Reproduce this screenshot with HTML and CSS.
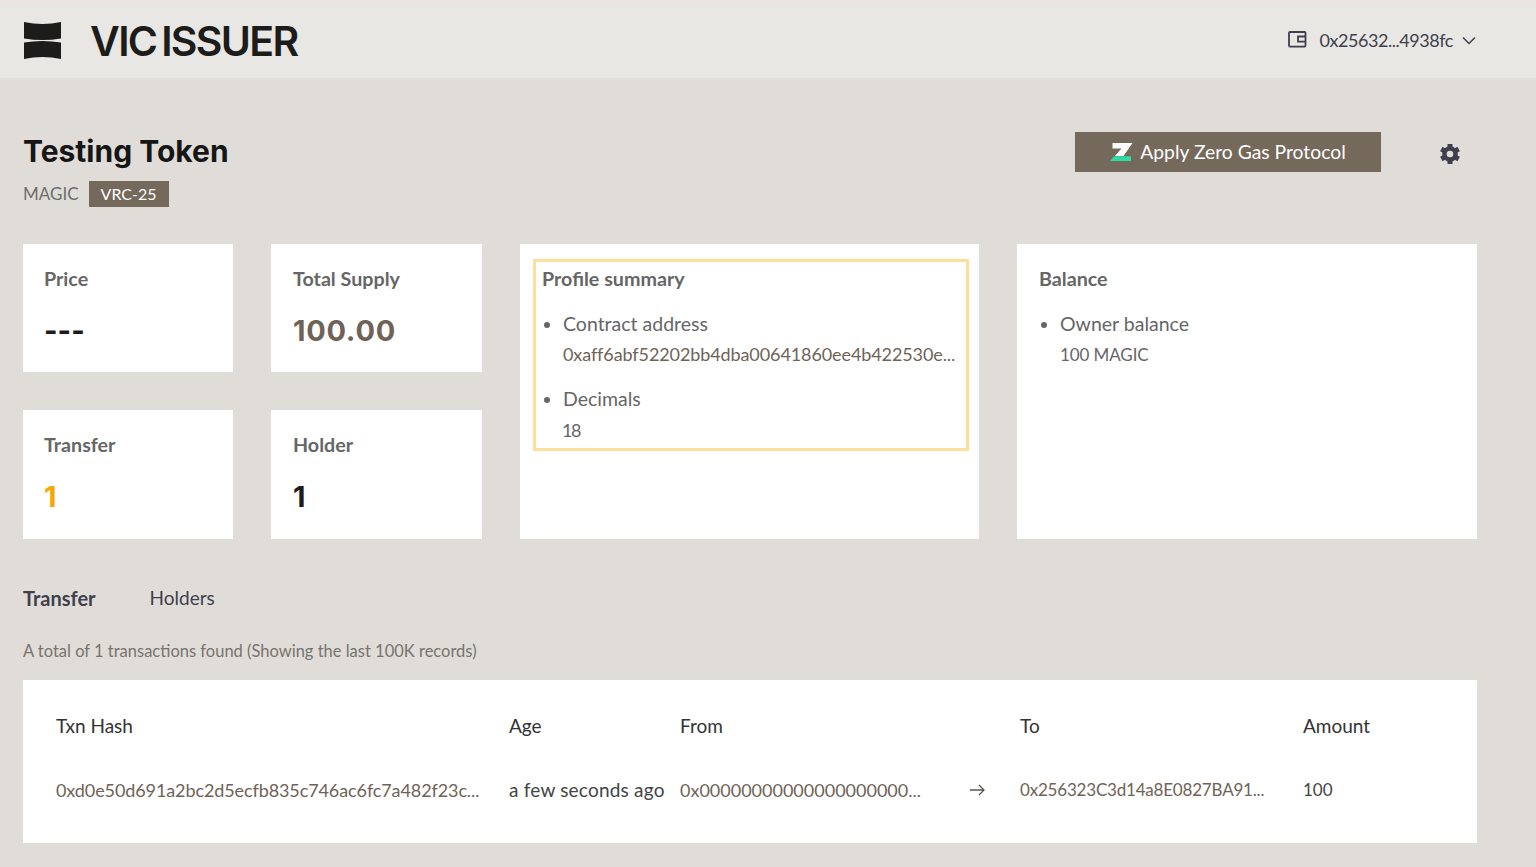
FILE: index.html
```html
<!doctype html>
<html lang="en">
  <head>
    <meta charset="UTF-8" />
    <meta name="viewport" content="width=device-width, initial-scale=1.0" />
    <title>VIC Issuer</title>
    <link rel="stylesheet" href="styles.css">
  </head>
  <body>
    <header class="topbar">
      <div class="brand">
        <svg class="brand-logo" width="37" height="37" viewBox="0 0 37 37">
          <path d="M0 0 Q18.500 4 37 0 V16.500 Q18.500 19.500 0 16.500 Z" fill="#1c1c1b" />
          <path d="M0 20.500 Q18.500 17.500 37 20.500 V37 Q18.500 33 0 37 Z" fill="#1c1c1b" />
        </svg>
        <span class="brand-name">VIC ISSUER</span>
      </div>
      <div class="wallet">
        <svg class="wallet-icon" width="19" height="17" viewBox="0 0 19 17" fill="none" stroke="#3f3f4d" stroke-width="1.800">
          <rect x="1" y="1" width="16.500" height="14.600" rx="1" />
          <path d="M17.500 5.500H10V10.700H17.500" />
        </svg>
        <span class="wallet-address">0x25632...4938fc</span>
        <svg class="wallet-caret" width="14" height="9" viewBox="0 0 14 9" fill="none" stroke="#3f3f4d" stroke-width="1.500">
          <path d="M1 1.500L7 7.500L13 1.500" />
        </svg>
      </div>
    </header>

    <main class="page">
      <div class="title-row">
        <div>
          <h1>Testing Token</h1>
          <div class="token-meta">
            <span class="symbol">MAGIC</span>
            <span class="badge">VRC-25</span>
          </div>
        </div>
        <div class="title-actions">
          <button class="zero-gas">
            <svg width="24" height="19" viewBox="0 0 24 19">
              <path d="M2.500 0H22.500L13.500 13H5L11.500 5.500H2.500Z" fill="#fff" />
              <path d="M4 13.300H21V18H0Z" fill="#2edba5" />
            </svg>
            <span class="zero-gas-label">Apply Zero Gas Protocol</span>
          </button>
          <svg class="gear" width="20" height="20" viewBox="0 0 24 24" fill="#3f3f4d">
            <circle cx="12" cy="12" r="6.700" fill="none" stroke="#3f3f4d" stroke-width="5.400" />
            <path d="M9 0h6v5H9z" />
            <path d="M9 0h6v5H9z" transform="rotate(60 12 12)" />
            <path d="M9 0h6v5H9z" transform="rotate(120 12 12)" />
            <path d="M9 0h6v5H9z" transform="rotate(180 12 12)" />
            <path d="M9 0h6v5H9z" transform="rotate(240 12 12)" />
            <path d="M9 0h6v5H9z" transform="rotate(300 12 12)" />
          </svg>
        </div>
      </div>

      <section class="overview">
        <div class="stats">
          <div class="card stat">
            <div class="card-title">Price</div>
            <div class="stat-value">---</div>
          </div>
          <div class="card stat">
            <div class="card-title">Total Supply</div>
            <div class="stat-value stat-brown">100.00</div>
          </div>
          <div class="card stat">
            <div class="card-title">Transfer</div>
            <div class="stat-value stat-orange">1</div>
          </div>
          <div class="card stat">
            <div class="card-title">Holder</div>
            <div class="stat-value">1</div>
          </div>
        </div>

        <div class="card panel">
          <div class="profile-box">
            <div class="card-title">Profile summary</div>
            <ul class="info-list">
              <li>
                Contract address
                <div class="info-value brown">0xaff6abf52202bb4dba00641860ee4b422530e...</div>
              </li>
              <li>
                Decimals
                <div class="info-value info-small">18</div>
              </li>
            </ul>
          </div>
        </div>

        <div class="card panel balance">
          <div class="card-title">Balance</div>
          <ul class="info-list">
            <li>
              Owner balance
              <div class="info-value info-amount">100 MAGIC</div>
            </li>
          </ul>
        </div>
      </section>

      <nav class="tabs">
        <span class="tab active">Transfer</span>
        <span class="tab">Holders</span>
      </nav>

      <p class="total">A total of 1 transactions found (Showing the last 100K records)</p>

      <section class="card table-card">
        <div class="txn-row txn-head">
          <span>Txn Hash</span>
          <span>Age</span>
          <span>From</span>
          <span></span>
          <span>To</span>
          <span>Amount</span>
        </div>
        <div class="txn-row txn-body">
          <span class="brown hash">0xd0e50d691a2bc2d5ecfb835c746ac6fc7a482f23c...</span>
          <span class="dark age">a few seconds ago</span>
          <span class="brown from">0x00000000000000000000...</span>
          <svg class="arrow" width="15" height="12" viewBox="0 0 15 12" fill="none" stroke="#5f554b" stroke-width="1.300">
            <path d="M0 6H14M9 1L14 6L9 11" />
          </svg>
          <span class="brown to">0x256323C3d14a8E0827BA91...</span>
          <span class="dark amount">100</span>
        </div>
      </section>
    </main>
  </body>
</html>
```

FILE: styles.css
```css
* {
  box-sizing: border-box;
}

body {
  font-family: Lato, "Open Sans", sans-serif;
  margin: 0;
  background: #e0ddd8;
  color: #666;
  font-size: 19px;
}

.topbar {
  height: 78px;
  background: #e9e7e3;
  border-top: 1px solid #f3dfdd;
  display: flex;
  align-items: center;
  justify-content: space-between;
  padding: 0 59px 0 24px;
}

.brand {
  display: flex;
  align-items: center;
  gap: 29px;
}

.brand-logo {
  margin-top: 2px;
}

.brand-name {
  font-family: Inter, sans-serif;
  font-weight: 600;
  font-size: 41px;
  letter-spacing: -1.700px;
  word-spacing: -3.700px;
  color: #1c1c1b;
  position: relative;
  top: 1px;
}

.wallet {
  display: flex;
  align-items: center;
  color: #3f3f4d;
  padding-right: 1px;
}

.wallet-address {
  font-size: 18px;
  letter-spacing: -0.450px;
  margin: 0 9px 0 12px;
}

.wallet-caret {
  margin-top: 2px;
}

.page {
  padding: 53px 59px 0 23px;
}

.title-row {
  display: flex;
  justify-content: space-between;
  align-items: flex-start;
}

h1 {
  margin: 0;
  font-family: Inter, sans-serif;
  font-size: 30px;
  line-height: 41px;
  font-weight: 700;
  color: #161616;
}

.token-meta {
  display: flex;
  align-items: center;
  gap: 10px;
  margin-top: 9px;
}

.symbol {
  color: #6d6d6d;
  font-size: 17px;
  margin-bottom: 2px;
}

.badge {
  background: #75695c;
  color: #fff;
  font-size: 16px;
  width: 80px;
  height: 26px;
  padding-bottom: 2px;
  display: flex;
  align-items: center;
  justify-content: center;
}

.title-actions {
  display: flex;
  align-items: center;
  gap: 59px;
  padding-right: 17px;
  margin-top: 1px;
}

.zero-gas {
  display: flex;
  align-items: center;
  justify-content: center;
  gap: 6px;
  width: 306px;
  height: 40px;
  border: 0;
  background: #75695c;
  color: #fff;
  font-family: inherit;
  font-size: 19.300px;
}

.zero-gas-label {
  margin-bottom: 2px;
}

.gear {
  margin-top: 3px;
}

.overview {
  display: grid;
  grid-template-columns: 459px 459px 460px;
  gap: 38px;
  margin-top: 37px;
  height: 295px;
}

.stats {
  display: grid;
  grid-template-columns: 210px 211px;
  grid-template-rows: 128px 129px;
  gap: 38px;
}

.card {
  background: #fff;
}

.stat {
  padding: 23px 21px;
}

.stat:nth-child(even) {
  padding-left: 22px;
}

.card-title {
  font-weight: 700;
  font-size: 19.700px;
  line-height: 23px;
  color: #666;
}

.stat-value {
  font-family: Inter, sans-serif;
  font-weight: 700;
  font-size: 29px;
  line-height: 36px;
  margin-top: 23px;
  color: #1c1c1b;
}

.stat-brown {
  color: #6f6357;
  letter-spacing: 0.700px;
}

.stat-orange {
  color: #f5a800;
}

.panel {
  padding: 15px 10px 0 13px;
}

.balance {
  padding: 23px 22px;
}

.profile-box {
  border: 3px solid #fbdf9a;
  padding: 5px 6px 0;
  height: 192px;
}

.info-list {
  margin: 19px 0 0;
  padding: 0 0 0 21px;
  list-style: disc;
}

.info-list li {
  line-height: 30px;
  margin-bottom: 15px;
  color: #666;
  font-size: 19.500px;
}

.info-value {
  white-space: nowrap;
  font-size: 18px;
  letter-spacing: -0.100px;
}

.info-amount {
  font-size: 17px;
  line-height: 32px;
}

.info-small {
  letter-spacing: -1.500px;
  line-height: 32px;
  margin-left: -1px;
}

.brown {
  color: #6f6357;
}

.dark {
  color: #444;
}

.tabs {
  display: flex;
  gap: 54px;
  margin-top: 47px;
  line-height: 24px;
  color: #3f3f4d;
}

.tab.active {
  font-weight: 700;
  font-size: 20px;
}

.total {
  margin: 29px 0 0;
  font-size: 16.500px;
  line-height: 24px;
  color: #77736e;
}

.table-card {
  margin-top: 17px;
  height: 163px;
  padding: 34px 33px 0;
}

.txn-row {
  display: grid;
  grid-template-columns: 453px 171px 290px 50px 283px 1fr;
  align-items: center;
  line-height: 24px;
}

.txn-head {
  color: #333;
}

.txn-body {
  margin-top: 40px;
}

.hash {
  font-size: 18px;
  letter-spacing: -0.100px;
}

.age {
  letter-spacing: 0.200px;
}

.from {
  font-size: 18px;
}

.to {
  font-size: 17px;
  letter-spacing: -0.200px;
}

.amount {
  font-size: 17px;
}

.arrow {
  justify-self: start;
}
```
